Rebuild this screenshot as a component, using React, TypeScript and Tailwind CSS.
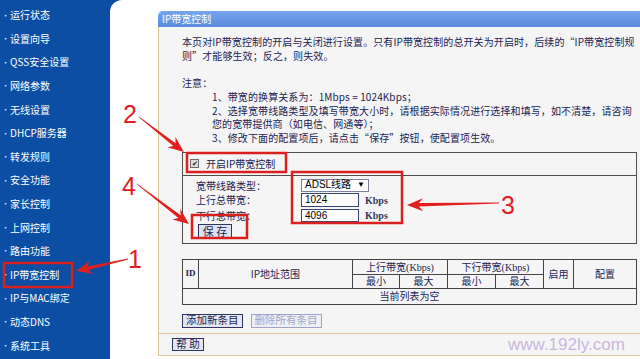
import React from "react";

const MENU = [
  "运行状态",
  "设置向导",
  "QSS安全设置",
  "网络参数",
  "无线设置",
  "DHCP服务器",
  "转发规则",
  "安全功能",
  "家长控制",
  "上网控制",
  "路由功能",
  "IP带宽控制",
  "IP与MAC绑定",
  "动态DNS",
  "系统工具",
];

// tapered red arrow, tail -> tip
function arrow(x1: number, y1: number, x2: number, y2: number) {
  const dx = x2 - x1;
  const dy = y2 - y1;
  const len = Math.hypot(dx, dy);
  const ux = dx / len;
  const uy = dy / len;
  const px = -uy;
  const py = ux;
  const head = 16;
  const hw = 6.5;
  const bx = x2 - ux * head;
  const by = y2 - uy * head;
  const nx = x2 - ux * (head - 4);
  const ny = y2 - uy * (head - 4);
  const pts = [
    [x1 + px * 0.4, y1 + py * 0.4],
    [nx + px * 1.8, ny + py * 1.8],
    [bx + px * hw, by + py * hw],
    [x2, y2],
    [bx - px * hw, by - py * hw],
    [nx - px * 1.8, ny - py * 1.8],
    [x1 - px * 0.4, y1 - py * 0.4],
  ];
  return pts.map((p) => p.map((v) => v.toFixed(1)).join(",")).join(" ");
}

function Btn({ children, disabled }: { children: React.ReactNode; disabled?: boolean }) {
  return (
    <span
      className={`inline-flex items-center justify-center h-[14px] px-[3px] border leading-none text-[10.5px] ${
        disabled
          ? "border-[#9ea3c8] bg-[#eef0f6] text-[#a3a6cc]"
          : "border-[#2f3563] bg-[#e4e7f2] text-[#1b2454]"
      }`}
    >
      {children}
    </span>
  );
}

export default function App() {
  return (
    <div className="relative w-[640px] h-[359px] overflow-hidden bg-[#0b4ea3] flex text-[10px] text-[#1b2454] font-['Noto_Sans_CJK_SC',sans-serif]">
      {/* ─── Sidebar ─── */}
      <aside className="w-[110px] shrink-0 pt-[3px] flex flex-col">
        {MENU.map((m) => (
          <div key={m} className="h-[23.6px] flex items-center pl-[2px] text-white">
            <span className="w-[8px] text-[7px]">•</span>
            <span>{m}</span>
          </div>
        ))}
      </aside>

      {/* ─── Main ─── */}
      <main className="flex-1 bg-white rounded-tl-[12px] pl-[48px] pt-[11px] pb-[3px] flex">
        <div className="flex-1 flex flex-col">
          <div className="h-[16px] rounded-tl-[5px] bg-linear-to-b from-[#77a5ec] to-[#5a8bdc] text-white pl-[4px] leading-[16px]">
            IP带宽控制
          </div>

          <div className="flex-1 flex flex-col border-l border-b border-[#dcc59c] bg-[#f5f5f5]">
            <div className="pl-[23px] pr-[3px] pt-[8px]">
              <div className="leading-[13.7px] whitespace-nowrap tracking-[0.1px]">
                <p>本页对IP带宽控制的开启与关闭进行设置。只有IP带宽控制的总开关为开启时，后续的“IP带宽控制规</p>
                <p>则”才能够生效；反之，则失效。</p>
                <p className="h-[13.7px]" />
                <p>注意：</p>
                <div className="pl-[30px]">
                  <p>1、带宽的换算关系为：1Mbps = 1024Kbps；</p>
                  <p>2、选择宽带线路类型及填写带宽大小时，请根据实际情况进行选择和填写，如不清楚，请咨询</p>
                  <p>您的宽带提供商（如电信、网通等）；</p>
                  <p>3、修改下面的配置项后，请点击“保存”按钮，使配置项生效。</p>
                </div>
              </div>

              {/* ─── Settings box ─── */}
              <div className="mt-[7px] border border-[#4d4d4d]">
                <div className="h-[23px] flex items-center pl-[7px] border-b border-[#4d4d4d]">
                  <span className="w-[9px] h-[9px] border border-[#6b6b6b] bg-[#dcdcdc] flex items-center justify-center text-[7px] leading-none text-[#222]">
                    ✔
                  </span>
                  <span className="ml-[7px]">开启IP带宽控制</span>
                </div>
                <div className="pl-[13px] pt-[3px] pb-[4px]">
                  <div className="grid grid-cols-[105px_auto] items-center">
                    <span className="h-[13px] leading-[13px]">宽带线路类型：</span>
                    <span className="w-[68px] h-[13px] border border-[#7b7f9c] bg-white flex items-center justify-between px-[3px] font-['Liberation_Sans','Noto_Sans_CJK_SC',sans-serif] text-black leading-none">
                      <span>ADSL线路</span>
                      <span className="text-[8px]">▼</span>
                    </span>
                    <span className="h-[14px] leading-[14px] mt-[1px]">上行总带宽：</span>
                    <span className="flex items-center mt-[1px]">
                      <span className="w-[58px] h-[14px] border border-[#39457a] bg-white pl-[3px] leading-[12px] font-['Liberation_Sans',sans-serif] text-black">1024</span>
                      <span className="ml-[6px] font-['Liberation_Serif',serif] font-bold text-[#333a5c]">Kbps</span>
                    </span>
                    <span className="h-[13px] leading-[13px]">下行总带宽：</span>
                    <span className="flex items-center">
                      <span className="w-[58px] h-[13px] border border-[#39457a] bg-white pl-[3px] leading-[11px] font-['Liberation_Sans',sans-serif] text-black">4096</span>
                      <span className="ml-[6px] font-['Liberation_Serif',serif] font-bold text-[#333a5c]">Kbps</span>
                    </span>
                  </div>
                  <div className="mt-[1px] pl-[2px]">
                    <span className="inline-flex items-center justify-center w-[34px] h-[15px] border border-[#2f3563] bg-[#dfe2f0] text-[11px] leading-none">
                      保 存
                    </span>
                  </div>
                </div>
              </div>

              {/* ─── Rules table ─── */}
              <table className="mt-[15px] w-[454px] border-collapse border border-[#333] text-center table-fixed">
                <colgroup>
                  <col className="w-[16px]" />
                  <col className="w-[154px]" />
                  <col className="w-[47px]" />
                  <col className="w-[48px]" />
                  <col className="w-[48px]" />
                  <col className="w-[48px]" />
                  <col className="w-[30px]" />
                  <col className="w-[63px]" />
                </colgroup>
                <thead>
                  <tr className="h-[15px] leading-[13px]">
                    <th rowSpan={2} className="border border-[#444] font-['Liberation_Serif',serif] font-bold text-[9px]">ID</th>
                    <th rowSpan={2} className="border border-[#444] font-normal">IP地址范围</th>
                    <th colSpan={2} className="border border-[#444] font-normal">
                      上行带宽<span className="font-['Liberation_Serif',serif]">(Kbps)</span>
                    </th>
                    <th colSpan={2} className="border border-[#444] font-normal">
                      下行带宽<span className="font-['Liberation_Serif',serif]">(Kbps)</span>
                    </th>
                    <th rowSpan={2} className="border border-[#444] font-normal">启用</th>
                    <th rowSpan={2} className="border border-[#444] font-normal">配置</th>
                  </tr>
                  <tr className="h-[14px] leading-[12px]">
                    <th className="border border-[#444] font-normal">最小</th>
                    <th className="border border-[#444] font-normal">最大</th>
                    <th className="border border-[#444] font-normal">最小</th>
                    <th className="border border-[#444] font-normal">最大</th>
                  </tr>
                </thead>
                <tbody>
                  <tr className="h-[16px] leading-[14px]">
                    <td colSpan={8} className="border border-[#444]">当前列表为空</td>
                  </tr>
                </tbody>
              </table>

              <div className="mt-[9px] flex gap-[8px]">
                <Btn>添加新条目</Btn>
                <Btn disabled>删除所有条目</Btn>
              </div>
            </div>

            <div className="flex-1" />

            <div className="h-[22px] border-t border-[#dcc59c] flex items-center pl-[13px]">
              <span className="inline-flex items-center justify-center w-[32px] h-[13px] border border-[#2f3563] bg-[#e4e7f2] text-[10.5px] leading-none">
                帮 助
              </span>
            </div>
          </div>
        </div>
      </main>

      {/* ─── Watermark ─── */}
      <span className="absolute left-[508px] top-[336px] text-[17px] leading-none text-[#c9b7de] font-['Liberation_Sans',sans-serif]">
        www.192ly.com
      </span>

      {/* ─── Red annotations ─── */}
      <svg className="absolute inset-0 pointer-events-none" width="640" height="359" viewBox="0 0 640 359">
        <g fill="none" stroke="#d9201f" strokeWidth="2.5">
          <rect x="4" y="263" width="68" height="24" />
          <rect x="187" y="153" width="99" height="19" />
          <rect x="192" y="215" width="55" height="23" />
          <rect x="292" y="172" width="110" height="51" />
        </g>
        <g fill="#e0201e">
          <polygon points={arrow(139, 117, 184, 152)} />
          <polygon points={arrow(137, 184, 189, 224)} />
          <polygon points={arrow(499, 203, 407, 205)} />
          <polygon points={arrow(128, 259, 76, 271)} />
        </g>
        <g fill="#e0201e" fontFamily="Liberation Sans, sans-serif" fontSize="25">
          <text x="123" y="123">2</text>
          <text x="122" y="195">4</text>
          <text x="501" y="214">3</text>
          <text x="128" y="268">1</text>
        </g>
      </svg>
    </div>
  );
}
